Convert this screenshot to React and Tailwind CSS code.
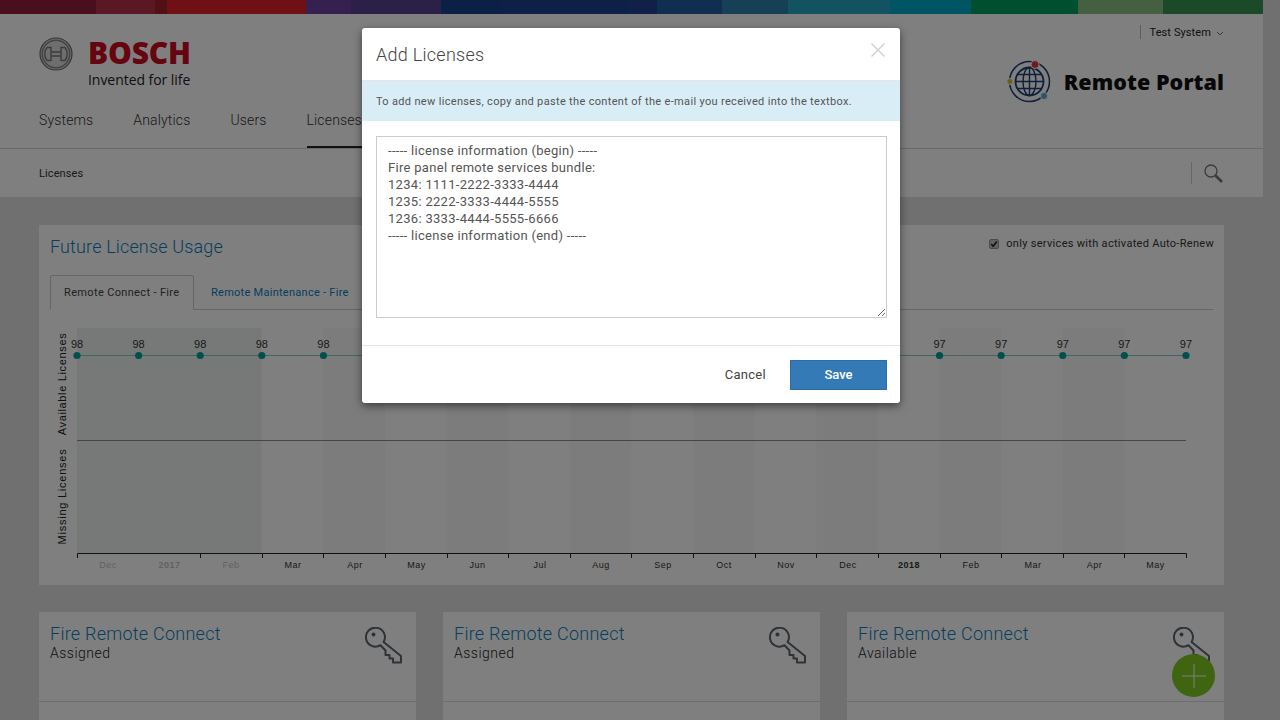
const UI = 'Roboto,"Noto Sans",sans-serif';

const SEGMENTS = [
  ['w-[96px]', 'bg-[#941f3c]'],
  ['w-[59px]', 'bg-[#b43048]'],
  ['w-[12px]', 'bg-[#a0202a]'],
  ['w-[139px]', 'bg-[#dc2028]'],
  ['w-[45px]', 'bg-[#6a40a0]'],
  ['w-[90px]', 'bg-[#544090]'],
  ['w-[61px]', 'bg-[#14408a]'],
  ['w-[126px]', 'bg-[#184090]'],
  ['w-[29px]', 'bg-[#204090]'],
  ['w-[65px]', 'bg-[#205ea0]'],
  ['w-[66px]', 'bg-[#2c80aa]'],
  ['w-[102px]', 'bg-[#26a4c0]'],
  ['w-[81px]', 'bg-[#00aaca]'],
  ['w-[107px]', 'bg-[#00a060]'],
  ['w-[85px]', 'bg-[#8ac080]'],
  ['flex-1', 'bg-[#349450]'],
];

function BoschMark() {
  return (
    <svg width="34" height="34" viewBox="0 0 34 34" className="shrink-0">
      <circle cx="17" cy="17" r="16" fill="#dcdcdc" stroke="#6c6c6c" strokeWidth="1.2" />
      <circle cx="17" cy="17" r="13.8" fill="none" stroke="#8a8a8a" strokeWidth="1.6" />
      <path d="M8 10.5 H12 V23.5 H8 M26 10.5 H22 V23.5 H26 M12 15 H22 M12 19 H22 M8 10.5 C5 14 5 20 8 23.5 M26 10.5 C29 14 29 20 26 23.5" fill="none" stroke="#777" strokeWidth="1.4" />
    </svg>
  );
}

function GlobeLogo() {
  return (
    <svg width="46" height="44" viewBox="0 0 46 44" className="shrink-0">
      <g fill="none" stroke="#1f3f75">
        <circle cx="23.5" cy="21.5" r="20" strokeWidth="1.5" />
        <circle cx="23.5" cy="21.5" r="14" strokeWidth="1.8" />
        <ellipse cx="23.5" cy="21.5" rx="6.5" ry="14" strokeWidth="1.4" />
        <path d="M23.5 7.5 V35.5 M9.5 21.5 H37.5 M11.5 14.5 H35.5 M11.5 28.5 H35.5" strokeWidth="1.4" />
      </g>
      <circle cx="29" cy="4.5" r="4" fill="#d9383f" stroke="#fff" />
      <circle cx="3.8" cy="21.5" r="3" fill="#d4bf2a" stroke="#fff" />
      <circle cx="38" cy="36" r="3.6" fill="#5aa7d6" stroke="#fff" />
    </svg>
  );
}

function KeyIcon() {
  return (
    <svg width="38" height="37" viewBox="-1 0 38 37" fill="none" stroke="#5b6670" strokeWidth="2" strokeLinejoin="round">
      <path d="M15.5 18.2 A9.5 9.5 0 1 1 18.6 15 L36 29 V35.5 H28 V31.5 H24.5 V28 H20.5 V23.5 Z" />
      <circle cx="8.5" cy="7.5" r="2" fill="#5b6670" stroke="none" />
    </svg>
  );
}

function LicenseCard({ status }) {
  return (
    <div className="h-[200px] bg-white">
      <div className="flex h-[90px] justify-between border-b border-[#dcdcdc] pl-[11px] pr-[14px]">
        <div className="pt-[9px]">
          <div className="text-[18px] leading-[25px] font-light tracking-[0.25px] text-[#0f7cba]">Fire Remote Connect</div>
          <div className="text-[14px] leading-[15px] font-light tracking-[0.5px] text-[#222]">{status}</div>
        </div>
        <div className="pt-[15px]"><KeyIcon /></div>
      </div>
    </div>
  );
}

const X0 = 77;
const STEP = 61.61;
const MONTHS = ['Dec', '2017', 'Feb', 'Mar', 'Apr', 'May', 'Jun', 'Jul', 'Aug', 'Sep', 'Oct', 'Nov', 'Dec', '2018', 'Feb', 'Mar', 'Apr', 'May'];
const LABEL_X = [108, 169.5, 231, 293, 355, 416.5, 477.5, 540, 601, 663, 724, 786, 848, 909, 971, 1033, 1094.5, 1155.5];
const VALUES = [98, 98, 98, 98, 98, 98, 98, 98, 98, 98, 98, 98, 98, 98, 97, 97, 97, 97, 97];

function Chart() {
  const xs = VALUES.map((_, i) => X0 + i * STEP);
  return (
    <svg width="1185" height="270" viewBox="39 315 1185 270" className="block" fontFamily='"Liberation Sans",Arial,sans-serif'>
      <rect x="77" y="328" width="184.5" height="225" fill="#eef3f0" />
      {[4, 6, 8, 10, 12, 14, 16].map((i) => (
        <rect key={i} x={xs[i]} y="328" width={STEP} height="225" fill="#f8f8f8" />
      ))}
      <line x1="77" x2="1186" y1="355.5" y2="355.5" stroke="#7fcfc8" />
      <line x1="77" x2="1186" y1="440.5" y2="440.5" stroke="#8c8c8c" />
      {xs.map((x, i) => (
        <g key={i}>
          <text x={x} y="347.5" textAnchor="middle" fontSize="11" fill="#333">{VALUES[i]}</text>
          <circle cx={x} cy="355.5" r="3.6" fill="#00a09a" />
        </g>
      ))}
      <text transform="translate(66 384) rotate(-90)" textAnchor="middle" fontSize="11" letterSpacing="0.65" fill="#222">Available Licenses</text>
      <text transform="translate(66 496.5) rotate(-90)" textAnchor="middle" fontSize="11" letterSpacing="0.75" fill="#222">Missing Licenses</text>
      <path d="M77.5 558 V553.5 H1186.5 V558" fill="none" stroke="#222" />
      {xs.slice(2, 18).map((x, i) => (
        <line key={i} x1={Math.round(x) + 0.5} x2={Math.round(x) + 0.5} y1="553" y2="558" stroke="#222" />
      ))}
      {MONTHS.map((m, i) => {
        const past = i < 3;
        const year = m === '2017' || m === '2018';
        return (
          <text key={i} x={LABEL_X[i]} y="568" textAnchor="middle" fontSize="9" letterSpacing="0.5" fontWeight={year ? 700 : 400} fill={past ? '#c4c4c4' : '#333'}>{m}</text>
        );
      })}
    </svg>
  );
}

export default function App() {
  return (
    <div className="relative h-[720px] w-[1280px] overflow-hidden bg-[#e0e0e0]" style={{ fontFamily: UI }}>
      <div className="w-[1263px]">
        <div className="flex h-[14px]">
          {SEGMENTS.map(([w, c], i) => <div key={i} className={`${w} ${c}`} />)}
        </div>

        <header className="bg-white">
          <div className="flex h-[134px] justify-between pl-[39px] pr-[39px]">
            <div className="flex flex-col">
              <div className="flex gap-[15px] pt-[23px]">
                <BoschMark />
                <div>
                  <div className="text-[30px] leading-[31px] font-extrabold tracking-[-0.2px] text-[#cc0a1e]" style={{ fontFamily: '"Open Sans",sans-serif' }}>BOSCH</div>
                  <div className="mt-[2px] text-[14px] leading-[20px] tracking-[-0.05px] text-[#222]" style={{ fontFamily: '"Open Sans",sans-serif' }}>Invented for life</div>
                </div>
              </div>
              <nav className="mt-auto flex gap-[40px] text-[14px] font-light tracking-[0.15px] text-[#333]">
                <a className="flex h-[44px] items-center pb-[11px]">Systems</a>
                <a className="flex h-[44px] items-center pb-[11px]">Analytics</a>
                <a className="flex h-[44px] items-center pb-[11px]">Users</a>
                <a className="flex h-[44px] w-[60px] items-center border-b-2 border-[#222] pb-[9px]">Licenses</a>
              </nav>
            </div>
            <div className="flex flex-col items-end">
              <div className="mt-[11px] flex h-[14px] items-center gap-[5px] border-l border-[#bbb] pl-[9px] pt-[2px] text-[11px] tracking-[0.1px] text-[#222]">
                <span>Test System</span>
                <svg width="8" height="5" viewBox="0 0 8 5" fill="none" stroke="#777"><path d="M1 1 L4 4 L7 1" /></svg>
              </div>
              <div className="mt-[21px] flex items-center gap-[12px]">
                <GlobeLogo />
                <span className="text-[21.5px] leading-none font-extrabold tracking-[0.07px] text-[#111]" style={{ fontFamily: '"Open Sans",sans-serif' }}>Remote Portal</span>
              </div>
            </div>
          </div>
          <div className="flex h-[49px] items-center justify-between border-t border-[#d4d4d4] pl-[39px] pr-[39px]">
            <span className="pt-[2px] text-[11px] tracking-[0.1px] text-[#333]">Licenses</span>
            <div className="flex h-[22px] items-center gap-[12px] border-l border-[#ccc] pl-[12px]">
              <svg width="20" height="20" viewBox="0 0 20 20" fill="none" stroke="#777" className="mt-[2px]">
                <circle cx="7" cy="7" r="6" strokeWidth="1.3" />
                <path d="M11.5 11.5 L18 18" strokeWidth="2.6" />
              </svg>
            </div>
          </div>
        </header>

        <main className="px-[39px] pt-[28px]">
          <section className="h-[360px] bg-white">
            <div className="flex h-[35px] justify-between pl-[11px] pr-[10px] pt-[9px]">
              <h2 className="text-[18px] leading-[25px] font-light tracking-[0.15px] text-[#0f7cba]">Future License Usage</h2>
              <label className="mt-[2px] flex h-[16px] items-center gap-[7px] text-[11px] tracking-[0.3px] text-[#333]">
                <svg width="10" height="10" viewBox="0 0 10 10"><rect x="0.5" y="0.5" width="9" height="9" rx="1.5" fill="#c4c4c4" stroke="#999" /><path d="M2.2 5 L4.2 7.2 L7.8 2.6" fill="none" stroke="#222" strokeWidth="1.6" /></svg>
                only services with activated Auto-Renew
              </label>
            </div>
            <div className="mx-[11px] mt-[15px] flex h-[35px] border-b border-[#ccc] text-[11px]">
              <div className="flex h-[35px] w-[144px] items-center rounded-t-[3px] border border-b-white border-[#ccc] bg-white pl-[13px] pt-[2px] tracking-[0.35px] text-[#444]">Remote Connect - Fire</div>
              <div className="flex h-[35px] items-center pl-[17px] pt-[2px] tracking-[0.27px] text-[#0f7cba]">Remote Maintenance - Fire</div>
            </div>
            <div className="mt-[5px]"><Chart /></div>
          </section>

          <div className="mt-[27px] grid grid-cols-3 gap-[27px]">
            <LicenseCard status="Assigned" />
            <LicenseCard status="Assigned" />
            <LicenseCard status="Available" />
          </div>
        </main>
      </div>

      <button className="absolute left-[1172px] top-[654px] flex h-[43px] w-[43px] items-center justify-center rounded-full bg-[#7ecb20]">
        <svg width="24" height="24" viewBox="0 0 24 24" stroke="#fff" strokeWidth="1"><path d="M12 0 V24 M0 12 H24" /></svg>
      </button>

      <div className="absolute inset-0 flex justify-center bg-black/50 pr-[18px] pt-[28px]">
        <div className="h-[375px] w-[538px] rounded-[3px] bg-white shadow-[0_3px_9px_rgba(0,0,0,0.5)]">
          <div className="flex h-[53px] items-start justify-between border-b border-[#e5e5e5] pl-[14px] pr-[14px]">
            <h3 className="pt-[14px] text-[18px] leading-[25px] font-light tracking-[0.27px] text-[#444]">Add Licenses</h3>
            <svg width="14" height="14" viewBox="0 0 14 14" stroke="#cfcfcf" strokeWidth="1.4" className="mt-[15px] mr-[1px]"><path d="M0.5 0.5 L13.5 13.5 M13.5 0.5 L0.5 13.5" /></svg>
          </div>
          <div className="flex h-[40px] items-center bg-[#d9edf7] pl-[14px] pt-[3px] text-[11px] tracking-[0.33px] text-[#555]">
            To add new licenses, copy and paste the content of the e-mail you received into the textbox.
          </div>
          <div className="h-[225px] border-b border-[#e5e5e5] px-[14px] pt-[15px]">
            <textarea
              readOnly
              className="block h-[182px] w-[511px] border border-[#ccc] px-[11px] py-[5px] text-[13px] leading-[17px] tracking-[0.3px] text-[#555] outline-none"
              value={'----- license information (begin) -----\nFire panel remote services bundle:\n1234: 1111-2222-3333-4444\n1235: 2222-3333-4444-5555\n1236: 3333-4444-5555-6666\n----- license information (end) -----'}
            />
          </div>
          <div className="flex items-center justify-end gap-[24px] pr-[13px] pt-[14px]">
            <button className="text-[13px] tracking-[0.3px] text-[#444]">Cancel</button>
            <button className="h-[30px] w-[97px] border border-[#2e6da4] bg-[#337ab7] text-[13px] font-medium text-white">Save</button>
          </div>
        </div>
      </div>
    </div>
  );
}
